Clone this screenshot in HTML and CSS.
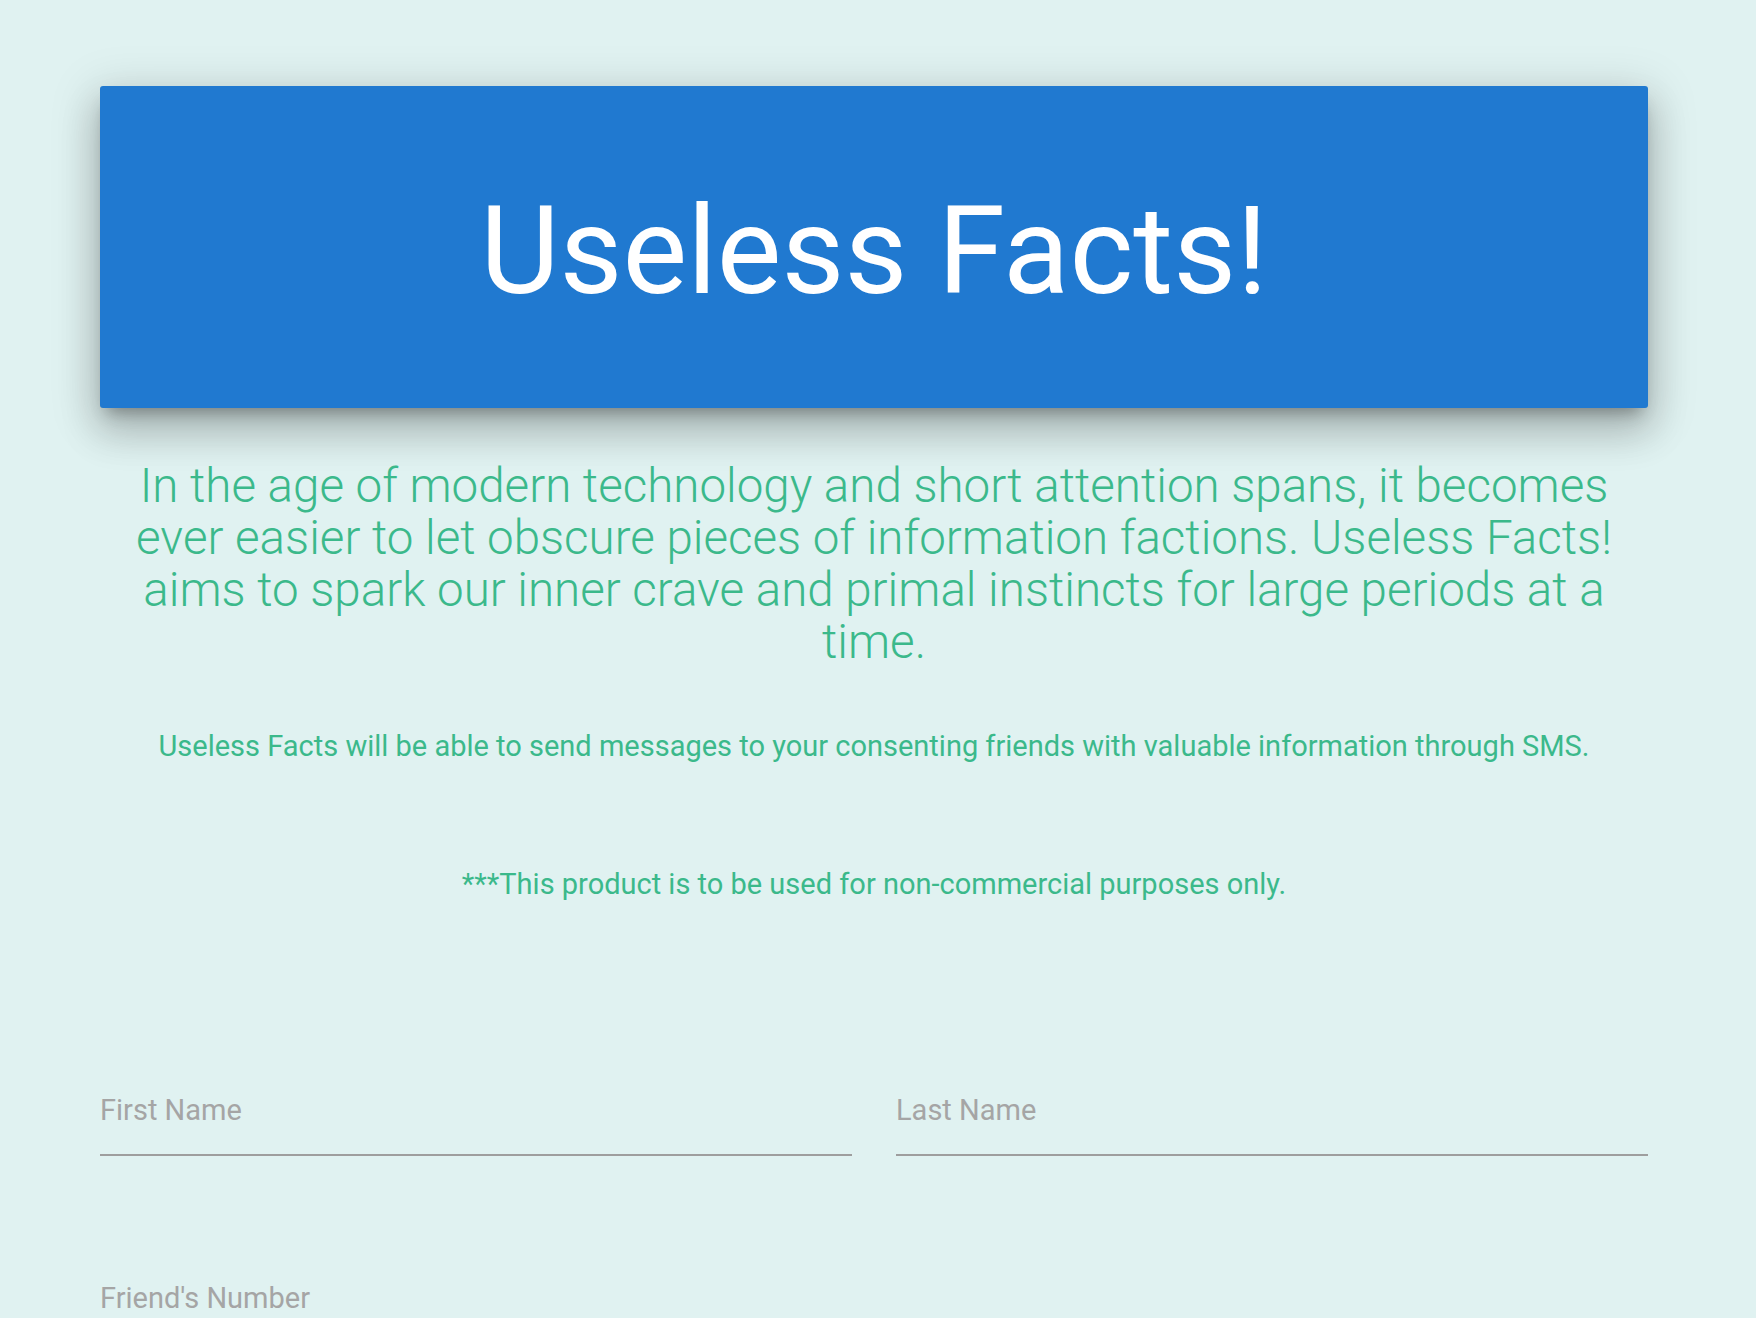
FILE: index.html
```html
<!DOCTYPE html>
<html lang="en">
<head>
<meta charset="utf-8">
<title>Useless Facts!</title>
<link rel="stylesheet" href="styles.css">
</head>
<body>
<div class="container">
  <header class="hero">
    <h1 class="hero-title">Useless Facts!</h1>
  </header>
  <p class="lead">In the age of modern technology and short attention spans, it becomes ever easier to let obscure pieces of information factions. Useless Facts! aims to spark our inner crave and primal instincts for large periods at a time.</p>
  <p class="note note-first">Useless Facts will be able to send messages to your consenting friends with valuable information through SMS.</p>
  <p class="note note-second">***This product is to be used for non-commercial purposes only.</p>
  <form class="form">
    <div class="row two">
      <div class="field">
        <label class="label" for="first">First Name</label>
        <input class="input" id="first" type="text">
      </div>
      <div class="field">
        <label class="label" for="last">Last Name</label>
        <input class="input" id="last" type="text">
      </div>
    </div>
    <div class="row one">
      <div class="field">
        <label class="label" for="num">Friend's Number</label>
        <input class="input" id="num" type="tel">
      </div>
    </div>
  </form>
</div>
</body>
</html>
```
FILE: styles.css
```css
html, body {
  margin: 0;
  padding: 0;
}
body {
  background: #e0f2f1;
  font-family: Roboto, "Liberation Sans", Arial, sans-serif;
  overflow: hidden;
}
.container {
  margin-left: 100px;
  width: 1548px;
  padding-top: 86px;
}
.hero {
  box-sizing: border-box;
  height: 322px;
  padding-top: 9px;
  background: #2079d0;
  border-radius: 3px;
  display: flex;
  align-items: center;
  justify-content: center;
  box-shadow: 0 24px 38px 3px rgba(0,0,0,0.16), 0 9px 46px 8px rgba(0,0,0,0.13), 0 11px 15px -7px rgba(0,0,0,0.3);
}
.hero-title {
  margin: 0;
  color: #ffffff;
  font-weight: 400;
  font-size: 122px;
  line-height: 1;
  letter-spacing: 0;
}
.lead {
  margin: 52px 16px 0;
  text-align: center;
  color: #3bb98b;
  font-weight: 300;
  font-size: 47.5px;
  line-height: 52px;
}
.note {
  margin: 0;
  text-align: center;
  color: #3bb98b;
  font-weight: 400;
  font-size: 29px;
  line-height: 42px;
}
.note-first {
  margin-top: 57px;
}
.note-second {
  margin-top: 96px;
}
.form {
  margin-top: 189px;
}
.row {
  display: grid;
  column-gap: 44px;
}
.row.two {
  grid-template-columns: 1fr 1fr;
}
.row.one {
  grid-template-columns: 1fr;
  margin-top: 126px;
}
.field {
  display: flex;
  flex-direction: column;
}
.label {
  color: #a5a5a5;
  font-size: 29px;
  line-height: 33px;
}
.input {
  display: block;
  box-sizing: content-box;
  height: 27px;
  padding: 0;
  margin: 0;
  border: none;
  border-bottom: 2px solid #9e9e9e;
  background: transparent;
  outline: none;
  font-family: inherit;
  font-size: 28px;
}
```
